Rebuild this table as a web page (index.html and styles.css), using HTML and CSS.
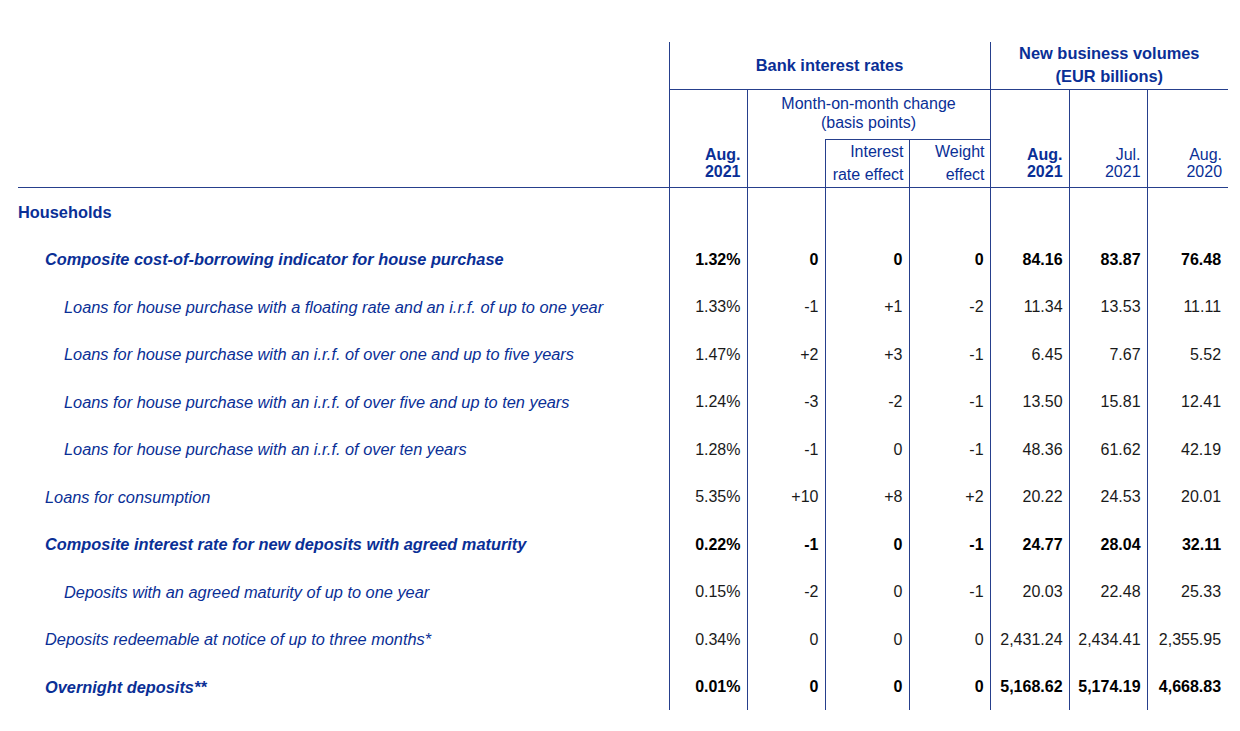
FILE: index.html
```html
<!DOCTYPE html>
<html>
<head>
<meta charset="utf-8">
<link rel="stylesheet" href="styles.css">
</head>
<body>
<table class="rates">
  <colgroup>
    <col class="c-label">
    <col class="c-78">
    <col class="c-78">
    <col class="c-84">
    <col class="c-81">
    <col class="c-79">
    <col class="c-78">
    <col class="c-81">
  </colgroup>
  <thead>
    <tr class="h-a">
      <th class="corner" rowspan="3"></th>
      <th class="group bl bb" colspan="4">Bank interest rates</th>
      <th class="group two bl bb" colspan="3">New business volumes<br>(EUR billions)</th>
    </tr>
    <tr class="h-b">
      <th class="period strong bl bb" rowspan="2">Aug.<br>2021</th>
      <th class="mom bl" colspan="3">Month-on-month change<br>(basis points)</th>
      <th class="period strong bl bb" rowspan="2">Aug.<br>2021</th>
      <th class="period bl bb" rowspan="2">Jul.<br>2021</th>
      <th class="period bl bb" rowspan="2">Aug.<br>2020</th>
    </tr>
    <tr class="h-c">
      <th class="blank bl bb"></th>
      <th class="effect bl bt bb">Interest<br>rate effect</th>
      <th class="effect bl bt bb">Weight<br>effect</th>
    </tr>
  </thead>
  <tbody>
    <tr class="section">
      <td class="label l0">Households</td>
      <td class="num"></td><td class="num"></td><td class="num"></td><td class="num"></td><td class="num"></td><td class="num"></td><td class="num last"></td>
    </tr>
    <tr class="bold">
      <td class="label l1">Composite cost-of-borrowing indicator for house purchase</td>
      <td class="num">1.32%</td><td class="num">0</td><td class="num">0</td><td class="num">0</td><td class="num">84.16</td><td class="num">83.87</td><td class="num last">76.48</td>
    </tr>
    <tr>
      <td class="label l2">Loans for house purchase with a floating rate and an i.r.f. of up to one year</td>
      <td class="num">1.33%</td><td class="num">-1</td><td class="num">+1</td><td class="num">-2</td><td class="num">11.34</td><td class="num">13.53</td><td class="num last">11.11</td>
    </tr>
    <tr>
      <td class="label l2">Loans for house purchase with an i.r.f. of over one and up to five years</td>
      <td class="num">1.47%</td><td class="num">+2</td><td class="num">+3</td><td class="num">-1</td><td class="num">6.45</td><td class="num">7.67</td><td class="num last">5.52</td>
    </tr>
    <tr>
      <td class="label l2">Loans for house purchase with an i.r.f. of over five and up to ten years</td>
      <td class="num">1.24%</td><td class="num">-3</td><td class="num">-2</td><td class="num">-1</td><td class="num">13.50</td><td class="num">15.81</td><td class="num last">12.41</td>
    </tr>
    <tr>
      <td class="label l2">Loans for house purchase with an i.r.f. of over ten years</td>
      <td class="num">1.28%</td><td class="num">-1</td><td class="num">0</td><td class="num">-1</td><td class="num">48.36</td><td class="num">61.62</td><td class="num last">42.19</td>
    </tr>
    <tr>
      <td class="label l1">Loans for consumption</td>
      <td class="num">5.35%</td><td class="num">+10</td><td class="num">+8</td><td class="num">+2</td><td class="num">20.22</td><td class="num">24.53</td><td class="num last">20.01</td>
    </tr>
    <tr class="bold">
      <td class="label l1">Composite interest rate for new deposits with agreed maturity</td>
      <td class="num">0.22%</td><td class="num">-1</td><td class="num">0</td><td class="num">-1</td><td class="num">24.77</td><td class="num">28.04</td><td class="num last">32.11</td>
    </tr>
    <tr>
      <td class="label l2">Deposits with an agreed maturity of up to one year</td>
      <td class="num">0.15%</td><td class="num">-2</td><td class="num">0</td><td class="num">-1</td><td class="num">20.03</td><td class="num">22.48</td><td class="num last">25.33</td>
    </tr>
    <tr>
      <td class="label l1">Deposits redeemable at notice of up to three months*</td>
      <td class="num">0.34%</td><td class="num">0</td><td class="num">0</td><td class="num">0</td><td class="num">2,431.24</td><td class="num">2,434.41</td><td class="num last">2,355.95</td>
    </tr>
    <tr class="bold">
      <td class="label l1">Overnight deposits**</td>
      <td class="num">0.01%</td><td class="num">0</td><td class="num">0</td><td class="num">0</td><td class="num">5,168.62</td><td class="num">5,174.19</td><td class="num last">4,668.83</td>
    </tr>
  </tbody>
</table>
</body>
</html>
```

FILE: styles.css
```css
html, body {
  margin: 0;
  padding: 0;
  background: #ffffff;
}

body {
  font-family: "Liberation Sans", Arial, sans-serif;
  font-size: 16px;
  color: #0a2f96;
}

.rates {
  margin: 42px 0 0 18px;
  width: 1210px;
  table-layout: fixed;
  border-collapse: collapse;
  border-spacing: 0;
}

.c-label { width: 651px; }
.c-78 { width: 78px; }
.c-84 { width: 84px; }
.c-81 { width: 81px; }
.c-79 { width: 79px; }

.rates th,
.rates td {
  padding: 0;
  font-weight: normal;
}

.bl { border-left: 1px solid #263f8c; }
.bb { border-bottom: 1px solid #263f8c; }
.bt { border-top: 1px solid #263f8c; }

.corner {
  border-bottom: 1px solid #263f8c;
}

.h-a { height: 47px; }
.h-b { height: 50px; }
.h-c { height: 48px; }

.group {
  font-weight: bold !important;
  font-size: 16.4px;
  text-align: center;
  vertical-align: middle;
  line-height: 23px;
  color: #0a2f96;
}

.mom {
  text-align: center;
  vertical-align: middle;
  line-height: 19px;
  padding-bottom: 2px !important;
}

.period {
  text-align: right;
  vertical-align: bottom;
  line-height: 17px;
  padding: 0 6px 7px 0 !important;
}

.strong { font-weight: bold !important; }

.effect {
  text-align: right;
  vertical-align: middle;
  line-height: 23px;
  padding-right: 5px !important;
}

.rates tbody tr { height: 47.5px; }

.rates tbody td { padding-top: 3px; }

.label {
  vertical-align: middle;
  font-style: italic;
  font-size: 16.35px;
  white-space: nowrap;
  color: #0a2f96;
}

.section .label {
  font-style: normal;
  font-weight: bold;
}

.bold .label { font-weight: bold; }

.l0 { padding-left: 0; }
.l1 { padding-left: 27px !important; }
.l2 { padding-left: 46px !important; }

.num {
  text-align: right;
  vertical-align: middle;
  padding-right: 6px !important;
  border-left: 1px solid #263f8c;
  color: #1a1a1a;
  white-space: nowrap;
}

.num.last { padding-right: 7px !important; }

.bold .num {
  font-weight: bold;
  color: #000000;
}
```
